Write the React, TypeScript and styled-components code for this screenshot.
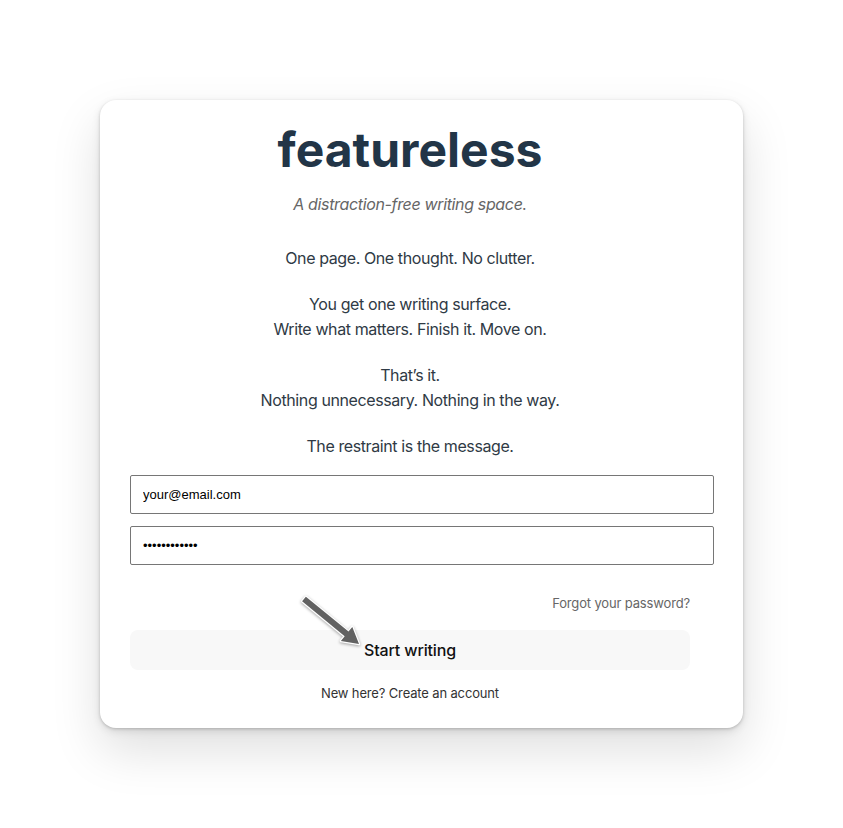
import styled, { createGlobalStyle } from "styled-components";

const GlobalStyle = createGlobalStyle`
  html, body {
    margin: 0;
    padding: 0;
    background: #ffffff;
  }

  body {
    font-family: Inter, "Noto Sans", Arial, sans-serif;
    -webkit-font-smoothing: antialiased;
  }
`;

const Page = styled.main`
  width: 843px;
  height: 828px;
  padding-top: 100px;
  padding-left: 100px;
  box-sizing: border-box;
`;

const Card = styled.section`
  position: relative;
  width: 643px;
  height: 628px;
  box-sizing: border-box;
  padding: 21px 53px 0 30px;
  background: #ffffff;
  border-radius: 16px;
  box-shadow:
    0 1px 3px rgba(0, 0, 0, 0.18),
    0 3px 8px rgba(0, 0, 0, 0.1),
    0 22px 50px rgba(0, 0, 0, 0.13);
  display: flex;
  flex-direction: column;
`;

const Title = styled.h1`
  margin: 0;
  font-size: 48px;
  line-height: 58px;
  font-weight: 700;
  color: #223547;
  text-align: center;
  letter-spacing: 0;
`;

const Tagline = styled.p`
  margin: 13px 0 30px;
  font-size: 16px;
  line-height: 24px;
  font-style: italic;
  color: #666666;
  text-align: center;
  letter-spacing: -0.35px;
`;

const Intro = styled.div`
  display: flex;
  flex-direction: column;
  gap: 22px;
  margin: -0.25px 0 16.25px;
`;

const Copy = styled.p`
  margin: 0;
  font-size: 16px;
  line-height: 24.5px;
  color: #2f3a45;
  text-align: center;
  letter-spacing: -0.4px;
`;

const Form = styled.form`
  display: flex;
  flex-direction: column;
`;

const Field = styled.input`
  width: 558px;
  height: 37px;
  padding: 0 12px;
  margin: 0 0 12px;
  border: 1px solid #767676;
  border-radius: 2px;
  font-family: Arial, "Liberation Sans", sans-serif;
  font-size: 13px;
  color: #000000;
  background: #ffffff;
  outline: none;

  &:last-of-type {
    margin-bottom: 0;
  }
`;

const Forgot = styled.a`
  align-self: flex-end;
  margin-top: 30px;
  font-size: 13px;
  line-height: 16px;
  color: #666666;
  text-decoration: none;
  letter-spacing: -0.15px;
`;

const Submit = styled.button`
  margin-top: 19px;
  height: 40px;
  border: none;
  border-radius: 8px;
  background: #f8f8f8;
  font-family: Inter, "Noto Sans", Arial, sans-serif;
  font-size: 16px;
  font-weight: 500;
  color: #111111;
  letter-spacing: -0.15px;
  cursor: pointer;
`;

const SignUp = styled.p`
  margin: 15px 0 0;
  font-size: 13px;
  line-height: 16px;
  color: #333333;
  text-align: center;
  letter-spacing: -0.15px;
`;

const Pointer = styled.svg`
  position: absolute;
  left: 198px;
  top: 493px;
  overflow: visible;
  filter: drop-shadow(0 1px 1.5px rgba(0, 0, 0, 0.35));
`;

const App = () => {
  return (
    <>
      <GlobalStyle />
      <Page>
        <Card>
          <Title>featureless</Title>
          <Tagline>A distraction-free writing space.</Tagline>
          <Intro>
            <Copy>One page. One thought. No clutter.</Copy>
            <Copy>
              You get one writing surface.
              <br />
              Write what matters. Finish it. Move on.
            </Copy>
            <Copy>
              That’s it.
              <br />
              Nothing unnecessary. Nothing in the way.
            </Copy>
            <Copy>The restraint is the message.</Copy>
          </Intro>
          <Form onSubmit={(e) => e.preventDefault()}>
            <Field type="email" defaultValue="your@email.com" />
            <Field type="password" defaultValue="password1234" />
            <Forgot href="#">Forgot your password?</Forgot>
            <Submit type="submit">Start writing</Submit>
          </Form>
          <SignUp>New here? Create an account</SignUp>
          {/* annotation arrow pointing at the button */}
          <Pointer width="62" height="52" viewBox="0 0 62 52">
            <path
              d="M7.9 3.7 L50.5 38.6 L54.3 33.9 L61 51 L42.9 47.9 L46.7 43.2 L4.1 8.3 Z"
              fill="#626262"
              stroke="#ffffff"
              strokeWidth="2.5"
              strokeLinejoin="round"
              paintOrder="stroke"
            />
          </Pointer>
        </Card>
      </Page>
    </>
  );
};

export default App;
